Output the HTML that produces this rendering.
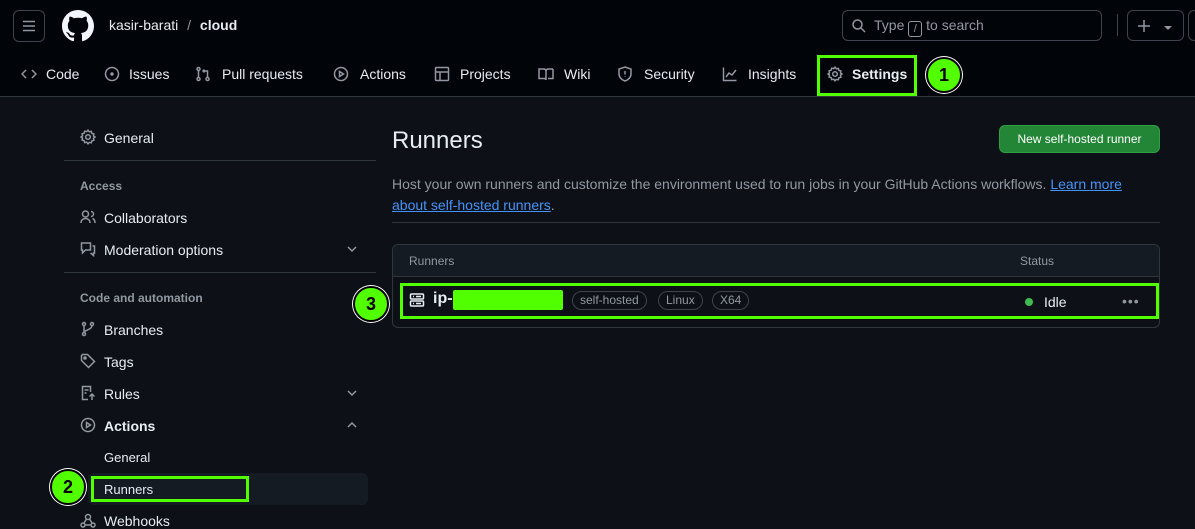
<!DOCTYPE html>
<html><head><meta charset="utf-8"><style>
*{box-sizing:border-box;margin:0;padding:0}
body{width:1195px;height:528px;overflow:hidden;background:#0d1117;color:#e6edf3;font-family:"Liberation Sans","DejaVu Sans",sans-serif;font-size:14px;position:relative}
.a{position:absolute;white-space:nowrap}
.hdr{position:absolute;left:0;top:0;width:1195px;height:97px;background:#010409;border-bottom:1px solid #30363d}
.ic{position:absolute;fill:none;stroke:#9198a1;stroke-width:1.5}
.tab{position:absolute;top:66px;color:#e6edf3;font-size:14px}
.side{color:#e6edf3;font-size:14px}
.sec{color:#9198a1;font-size:12px;font-weight:bold}
.circ{position:absolute;width:36px;height:36px;border-radius:50%;background:#52ff00;border:2px solid #000;box-shadow:0 0 0 1px #fff;color:#000;font-weight:bold;font-size:18px;text-align:center;line-height:32px}
.lbl{position:absolute;top:291px;height:19px;border:1px solid #3d444d;border-radius:10px;color:#9198a1;font-size:12px;line-height:17px;padding:0 7px}
</style></head><body>
<div class="hdr"></div>
<div class="a" style="left:13px;top:10px;width:32px;height:32px;border:1px solid #3d444d;border-radius:6px"></div>
<svg class="ic" style="left:21px;top:18px" width="16" height="16"><path d="M2 3.5h12M2 8h12M2 12.5h12" stroke="#9198a1"/></svg>
<svg class="a" style="left:62px;top:10px" width="32" height="32" viewBox="0 0 16 16"><path fill="#f0f6fc" d="M8 0C3.58 0 0 3.58 0 8c0 3.540 2.29 6.53 5.47 7.59.4.07.55-.17.55-.38 0-.19-.01-.82-.01-1.49-2.010.37-2.53-.49-2.69-.94-.09-.23-.48-.94-.82-1.13-.28-.15-.68-.52-.01-.53.63-.01 1.080.58 1.230.82.72 1.210 1.870.87 2.330.66.07-.52.28-.87.51-1.070-1.78-.2-3.64-.89-3.64-3.950 0-.87.31-1.590.82-2.150-.08-.2-.36-1.020.08-2.120 0 0 .67-.21 2.2.82.64-.18 1.320-.27 2-.27.68 0 1.360.09 2 .27 1.530-1.040 2.2-.82 2.2-.82.44 1.1.16 1.920.08 2.120.51.56.82 1.270.82 2.150 0 3.070-1.870 3.750-3.650 3.950.29.25.54.73.54 1.480 0 1.070-.01 1.930-.01 2.2 0 .21.15.46.55.38A8.013 8.013 0 0016 8c0-4.42-3.58-8-8-8z"/></svg>
<div class="a" style="left:109px;top:17px;font-size:14px">kasir-barati <span style="color:#9198a1;margin:0 5px">/</span> <b>cloud</b></div>
<div class="a" style="left:842px;top:10px;width:260px;height:31px;border:1px solid #3d444d;border-radius:6px"></div>
<svg class="ic" style="left:851px;top:18px" width="16" height="16"><circle cx="6.5" cy="6.5" r="4.5"/><path d="M10 10l4 4"/></svg>
<div class="a" style="left:874px;top:17px;color:#9198a1">Type <span style="display:inline-block;border:1px solid #9198a1;border-radius:3px;width:14px;height:16px;text-align:center;font-size:11px;line-height:14px;vertical-align:-2px">/</span> to search</div>
<div class="a" style="left:1117px;top:14px;width:1px;height:22px;background:#3d444d"></div>
<div class="a" style="left:1127px;top:10px;width:57px;height:31px;border:1px solid #3d444d;border-radius:6px"></div>
<svg class="ic" style="left:1136px;top:18px" width="16" height="16"><path d="M8 2v12M2 8h12"/></svg>
<div class="a" style="left:1164px;top:26px;border:4px solid transparent;border-top:4px solid #9198a1"></div>
<div class="a" style="left:1188px;top:10px;width:20px;height:31px;border:1px solid #3d444d;border-radius:6px"></div>

<svg class="ic" style="left:21px;top:66px" width="16" height="16"><path d="M5 4L1 8l4 4M11 4l4 4-4 4"/></svg><div class="tab" style="left:46px">Code</div>
<svg class="ic" style="left:104px;top:66px" width="16" height="16"><circle cx="8" cy="8" r="6.5"/><circle cx="8" cy="8" r="1" fill="#9198a1"/></svg><div class="tab" style="left:129px">Issues</div>
<svg class="ic" style="left:195px;top:66px" width="16" height="16"><circle cx="3.5" cy="3" r="1.5"/><circle cx="3.5" cy="13" r="1.5"/><circle cx="12.5" cy="13" r="1.5"/><path d="M3.5 4.5v7M12.5 11.5V5H8M9.5 3.5L8 5l1.5 1.5"/></svg><div class="tab" style="left:222px">Pull requests</div>
<svg class="ic" style="left:333px;top:66px" width="16" height="16"><circle cx="8" cy="8" r="6.5"/><path d="M6.5 5.5v5l4-2.5z"/></svg><div class="tab" style="left:360px">Actions</div>
<svg class="ic" style="left:434px;top:66px" width="16" height="16"><rect x="1.5" y="1.5" width="13" height="13" rx="1"/><path d="M1.5 6h13M6 6v8.5"/></svg><div class="tab" style="left:460px">Projects</div>
<svg class="ic" style="left:538px;top:66px" width="16" height="16"><path d="M1 3h4.5Q8 3 8 5v9Q8 12.5 6 12.5H1zM15 3h-4.5Q8 3 8 5M15 3v9.5h-5"/></svg><div class="tab" style="left:564px">Wiki</div>
<svg class="ic" style="left:617px;top:66px" width="16" height="16"><path d="M8 1l6 2v5c0 3.5-3 6-6 7-3-1-6-3.5-6-7V3z"/><path d="M8 5v3.5M8 10.5v.5"/></svg><div class="tab" style="left:644px">Security</div>
<svg class="ic" style="left:722px;top:66px" width="16" height="16"><path d="M1.5 1.5v13h13M4 11l3-4 3 2 4-5"/></svg><div class="tab" style="left:748px">Insights</div>
<div class="a" style="left:817px;top:55px;width:100px;height:41px;border:3px solid #52ff00"></div>
<svg class="ic" style="left:827px;top:66px" width="16" height="16"><circle cx="8" cy="8" r="2.3"/><path d="M8 1.2l1.3 1.6 2-.4.6 2 2 .6-.4 2L15 8l-1.5 1.2.4 2-2 .6-.6 2-2-.4L8 14.8l-1.3-1.6-2 .4-.6-2-2-.6.4-2L1 8l1.5-1.2-.4-2 2-.6.6-2 2 .4z"/></svg><div class="tab" style="left:852px;font-weight:bold">Settings</div>
<div class="circ" style="left:926px;top:57px">1</div>

<svg class="ic" style="left:80px;top:129px" width="16" height="16"><circle cx="8" cy="8" r="2.3"/><path d="M8 1.2l1.3 1.6 2-.4.6 2 2 .6-.4 2L15 8l-1.5 1.2.4 2-2 .6-.6 2-2-.4L8 14.8l-1.3-1.6-2 .4-.6-2-2-.6.4-2L1 8l1.5-1.2-.4-2 2-.6.6-2 2 .4z"/></svg>
<div class="a side" style="left:104px;top:130px">General</div>
<div class="a" style="left:64px;top:160px;width:312px;height:1px;background:#30363d"></div>
<div class="a sec" style="left:80px;top:179px">Access</div>
<svg class="ic" style="left:80px;top:209px" width="16" height="16"><circle cx="5.5" cy="5" r="3"/><path d="M1 14c0-3 2-4.5 4.5-4.5S10 11 10 14M11 2.5a2.5 2.5 0 010 5M12.5 9.5c1.5.5 2.5 2 2.5 4.5"/></svg>
<div class="a side" style="left:104px;top:210px">Collaborators</div>
<svg class="ic" style="left:80px;top:241px" width="16" height="16"><path d="M1.5 2h9v7h-5l-3 3V9h-1zM12.5 5h2v7h-1v2.5l-3-2.5"/></svg>
<div class="a side" style="left:104px;top:242px">Moderation options</div>
<svg class="ic" style="left:344px;top:241px" width="16" height="16"><path d="M4 6l4 4 4-4"/></svg>
<div class="a" style="left:64px;top:272px;width:312px;height:1px;background:#30363d"></div>
<div class="a sec" style="left:80px;top:291px">Code and automation</div>
<svg class="ic" style="left:80px;top:321px" width="16" height="16"><circle cx="4" cy="3" r="1.5"/><circle cx="4" cy="13" r="1.5"/><circle cx="12" cy="3" r="1.5"/><path d="M4 4.5v7M12 4.5c0 3-3 3.5-7.5 6"/></svg>
<div class="a side" style="left:104px;top:322px">Branches</div>
<svg class="ic" style="left:80px;top:353px" width="16" height="16"><path d="M1.5 2.5v5l7 7 6-6-7-7h-5z"/><circle cx="5" cy="5" r="1" fill="#9198a1"/></svg>
<div class="a side" style="left:104px;top:354px">Tags</div>
<svg class="ic" style="left:80px;top:385px" width="16" height="16"><path d="M8 14.5H2.5v-13h8V7M4.5 5h4M4.5 8h2M12 15V9M9.5 11.5L12 9l2.5 2.5"/></svg>
<div class="a side" style="left:104px;top:386px">Rules</div>
<svg class="ic" style="left:344px;top:385px" width="16" height="16"><path d="M4 6l4 4 4-4"/></svg>
<svg class="ic" style="left:80px;top:417px" width="16" height="16"><circle cx="8" cy="8" r="6.5"/><path d="M6.5 5.5v5l4-2.5z"/></svg>
<div class="a side" style="left:104px;top:418px;font-weight:bold">Actions</div>
<svg class="ic" style="left:344px;top:417px" width="16" height="16"><path d="M4 10l4-4 4 4"/></svg>
<div class="a" style="left:104px;top:450px;font-size:13px">General</div>
<div class="a" style="left:88px;top:473px;width:280px;height:32px;background:#151b23;border-radius:6px"></div>
<div class="a" style="left:91px;top:476px;width:158px;height:26px;border:3px solid #52ff00"></div>
<div class="a" style="left:104px;top:482px;font-size:13px">Runners</div>
<div class="circ" style="left:50px;top:469px">2</div>
<svg class="ic" style="left:80px;top:513px" width="16" height="16"><circle cx="8" cy="4" r="2.5"/><circle cx="3" cy="12" r="2"/><circle cx="13" cy="12" r="2"/><path d="M6.5 6L4 10M9.5 6l2.5 4M5 12h6"/></svg>
<div class="a side" style="left:104px;top:513px">Webhooks</div>

<div class="a" style="left:392px;top:127px;font-size:24px">Runners</div>
<div class="a" style="left:999px;top:125px;width:161px;height:28px;background:#238636;border:1px solid #2ea043;border-radius:6px;color:#fff;font-size:12px;text-align:center;line-height:26px">New self-hosted runner</div>
<div class="a" style="left:392px;top:174px;color:#9198a1;line-height:21px;white-space:normal;width:745px">Host your own runners and customize the environment used to run jobs in your GitHub Actions workflows. <span style="color:#4493f8;text-decoration:underline">Learn more about self-hosted runners</span>.</div>
<div class="a" style="left:392px;top:222px;width:768px;height:1px;background:#30363d"></div>
<div class="a" style="left:392px;top:244px;width:768px;height:84px;border:1px solid #30363d;border-radius:6px;overflow:hidden">
 <div style="height:32px;background:#151b23;border-bottom:1px solid #30363d"></div>
</div>
<div class="a" style="left:409px;top:254px;color:#9198a1;font-size:12px">Runners</div>
<div class="a" style="left:1020px;top:254px;color:#9198a1;font-size:12px">Status</div>
<div class="a" style="left:400px;top:283px;width:759px;height:36px;border:3px solid #52ff00"></div>
<svg class="ic" style="left:409px;top:292px;stroke:#e6edf3" width="16" height="16"><rect x="1.5" y="2" width="13" height="5" rx="1"/><rect x="1.5" y="9" width="13" height="5" rx="1"/><path d="M4 4.5h1M4 11.5h1M7 4.5h5M7 11.5h5"/></svg>
<div class="a" style="left:433px;top:290px;font-size:16px;font-weight:bold">ip-</div>
<div class="a" style="left:453px;top:290px;width:110px;height:20px;background:#52ff00;border-radius:2px"></div>
<div class="lbl" style="left:572px">self-hosted</div>
<div class="lbl" style="left:658px">Linux</div>
<div class="lbl" style="left:712px">X64</div>
<div class="a" style="left:1025px;top:298px;width:8px;height:8px;border-radius:50%;background:#3fb950"></div>
<div class="a" style="left:1044px;top:294px">Idle</div>
<div class="a" style="left:1122px;top:293px;color:#9198a1;font-size:14px;letter-spacing:1px">•••</div>
<div class="circ" style="left:353px;top:286px">3</div>
</body></html>
